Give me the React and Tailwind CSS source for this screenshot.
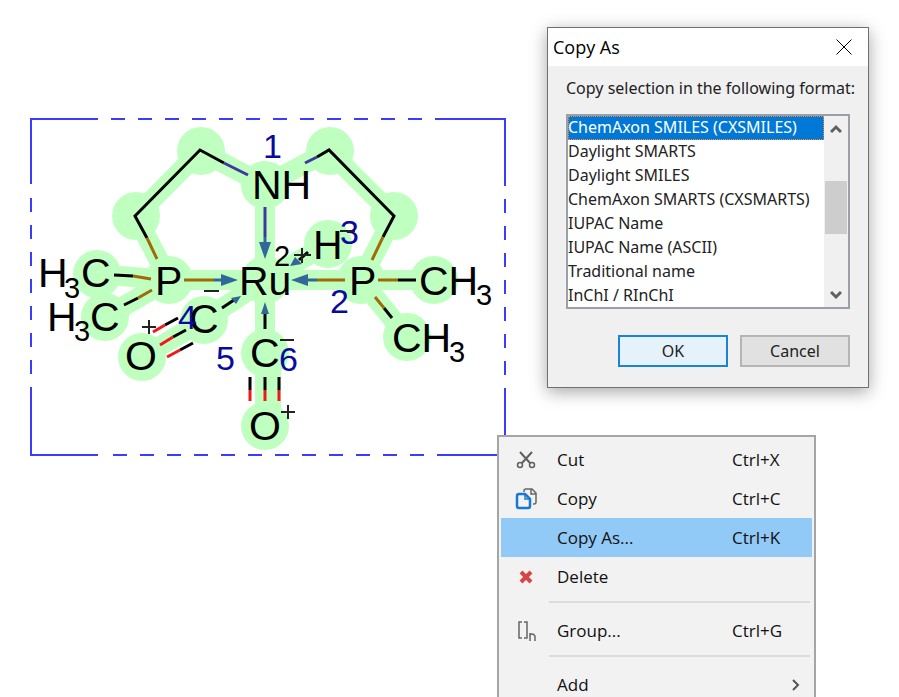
import React from 'react';

const formats = [
  'ChemAxon SMILES (CXSMILES)',
  'Daylight SMARTS',
  'Daylight SMILES',
  'ChemAxon SMARTS (CXSMARTS)',
  'IUPAC Name',
  'IUPAC Name (ASCII)',
  'Traditional name',
  'InChI / RInChI',
];

const atoms = [
  [201, 151], [136, 216], [265, 185], [330, 151], [394, 216], [169, 280], [265, 280], [361, 280],
  [434, 280], [407, 337], [97, 274], [105, 317], [204, 320], [142, 357], [265, 353], [265, 426], [328, 244],
];

const halos = [
  'M265 185L200 151L136 216L169 280H434', 'M265 185L329 151L394 216L361 280L407 337',
  'M97 274L169 280L105 317', 'M265 185V426', 'M271 353V426', 'M265 280L204 320L142 357', 'M328 244L265 280',
];

const bonds = [
  ['#000', 'M224 163L200 150L135 216L147 238M317 157L329 150L394 216L383 237M114 275L133 276M124 305L138 298M398 280H416M384 308L392 318M222 308L234 300M308 252L299 260M265 329V314M178 318L165 325M186 330L173 337M193 343L180 350M250 377V390M265 377V390M279 377V390'],
  ['#4038a0', 'M224 163L248 175M305 163L317 157M265 207V237'],
  ['#a06a08', 'M147 238L157 259M383 237L372 260M184 280H214M345 280H317M133 276L151 279M138 298L152 290M378 280H398M375 297L384 308'],
  ['#f01818', 'M165 325L153 332M173 337L160 345M180 350L167 357M250 390V401M265 390V401M279 390V401'],
  ['#336699', 'M265 237V244M214 280H222M317 280H306'],
];

const labels = [
  ['NH', 252, 199], ['H', 38, 287], ['C', 81, 287], ['H', 47, 331], ['C', 90, 331], ['P', 155, 295],
  ['Ru', 239, 295], ['H', 313, 259], ['P', 349, 295], ['CH', 419, 295], ['CH', 392, 352],
  ['C', 189, 333], ['O', 125, 370], ['C', 250, 367], ['O', 249, 440],
];
const subs = [['3', 64, 298], ['3', 74, 341], ['3', 476, 305], ['3', 449, 362], ['2', 274, 266]];
const marks = [['1', 263, 158], ['2', 330, 313], ['3', 340, 244], ['4', 178, 329], ['5', 216, 370], ['6', 279, 371]];

function Labels({ items, className }) {
  return (
    <g className={className}>
      {items.map(([t, x, y]) => <text key={`${x}-${y}`} x={x} y={y}>{t}</text>)}
    </g>
  );
}

function Molecule() {
  return (
    <svg width="520" height="470" viewBox="0 0 520 470" className="block font-['Liberation_Sans',Arial,sans-serif]" role="img" aria-label="Ruthenium complex">
      <g fill="#bfffbf">
        {atoms.map(([x, y]) => <circle key={`${x}-${y}`} cx={x} cy={y} r="24" />)}
      </g>
      <g fill="none" stroke="#bfffbf" strokeWidth="20">
        {halos.map((d) => <path key={d} d={d} />)}
      </g>
      <g fill="none" stroke="#3c3cff" strokeWidth="2">
        <path d="M98 119H31V184M31 387V455H98M437 119H505V186M505 389V455H437" />
        <path strokeDasharray="14 13" d="M111 119H437M113 455H437M31 198V387M505 199V389" />
      </g>
      <g fill="none" strokeWidth="3">
        {bonds.map(([c, d]) => <path key={c} stroke={c} d={d} />)}
      </g>
      <path fill="#336699" d="M259 242H271L265 259ZM221 274V286L238 280ZM308 274V286L291 280ZM261 314H269L265 302ZM290 266L295 257L302 264ZM241 296L231 298L236 304Z" />
      <Labels items={labels} className="text-[41px]" />
      <Labels items={subs} className="text-[29px]" />
      <Labels items={marks} className="fill-[#0a0a9c] text-[34px]" />
      <path fill="none" stroke="#222" strokeWidth="2" d="M294 255H311M302 248V263M340 231H355M204 291H219M280 340H294M142 327H156M149 320V334M281 412H295M288 405V419" />
    </svg>
  );
}

function CopyAsDialog() {
  return (
    <section role="dialog" aria-labelledby="dlg-title" className="absolute left-[547px] top-[27px] w-[322px] border border-[#707070] bg-[#f0f0f0] font-['Noto_Sans',sans-serif] shadow-[0_4px_16px_rgba(0,0,0,0.35)]">
      <header className="flex h-[38px] items-center justify-between bg-white pl-[5px] pr-4">
        <h1 id="dlg-title" className="font-['Open_Sans',sans-serif] text-[18px]">Copy As</h1>
        <button aria-label="Close">
          <svg width="16" height="16" viewBox="0 0 16 16" stroke="#000" strokeWidth="1"><path d="M.5.5L15.5 15.5M15.5.5L.5 15.5" /></svg>
        </button>
      </header>
      <div className="px-[18px] pb-5 pt-[10px]">
        <label htmlFor="format" className="block whitespace-nowrap text-[16px] leading-6 text-[#222]">Copy selection in the following format:</label>
        <div className="mt-[14px] flex h-[195px] border-2 border-[#9aa0a8] bg-white">
          <select id="format" size={8} defaultValue={formats[0]} className="min-w-0 flex-1 appearance-none overflow-hidden bg-white text-[16px] outline-none [scrollbar-width:none]">
            {formats.map((f) => (
              <option key={f} value={f} className="h-6 min-h-0 p-0 text-[16px] leading-6 text-[#222] checked:bg-[linear-gradient(#0078d7,#0078d7)] checked:outline-1 checked:-outline-offset-1 checked:outline-dotted checked:outline-[#ff8728] checked:[-webkit-text-fill-color:#fff]">{f}</option>
            ))}
          </select>
          <div className="flex w-6 flex-col items-center bg-[#f0f0f0] text-[#606060]">
            <svg width="12" height="24" viewBox="0 0 12 24" fill="none" stroke="currentColor" strokeWidth="3"><path d="M1 16L6 11L11 16" /></svg>
            <div className="mt-[41px] h-[53px] w-[22px] bg-[#cdcdcd]" />
            <svg className="mt-auto" width="12" height="24" viewBox="0 0 12 24" fill="none" stroke="currentColor" strokeWidth="3"><path d="M1 9L6 14L11 9" /></svg>
          </div>
        </div>
        <div className="mt-[26px] flex justify-end gap-3 text-[16px] leading-6 text-[#222]">
          <button className="h-8 w-[110px] border-2 border-[#1883d7] bg-[#e5f1fb]">OK</button>
          <button className="h-8 w-[110px] border-2 border-[#b5b5b5] bg-[#e1e1e1]">Cancel</button>
        </div>
      </div>
    </section>
  );
}

function CutIcon() {
  return (
    <svg width="20" height="18" viewBox="0 0 20 18" fill="none" stroke="#606060" strokeWidth="2">
      <path d="M4 1L14 12M16 1L6 12" /><circle cx="4" cy="14" r="2.5" strokeWidth="1.5" /><circle cx="16" cy="14" r="2.5" strokeWidth="1.5" />
    </svg>
  );
}

function CopyIcon() {
  return (
    <svg width="22" height="22" viewBox="0 0 22 22" fill="none">
      <path d="M9 4V3Q9 1 11 1H17L21 5V14Q21 16 19 16H18M16 1V6H21" stroke="#666" strokeWidth="1.5" />
      <path d="M4 6H10L15 11V18Q15 20 13 20H4Q2 20 2 18V8Q2 6 4 6Z" stroke="#1979d2" strokeWidth="2.5" strokeLinejoin="round" />
      <path d="M10 6V11H15" stroke="#1979d2" strokeWidth="1.5" />
    </svg>
  );
}

function DeleteIcon() {
  return <svg width="14" height="14" viewBox="0 0 14 14" stroke="#d64545" strokeWidth="4"><path d="M2 2L12 12M12 2L2 12" /></svg>;
}

function GroupIcon() {
  return (
    <svg width="20" height="22" viewBox="0 0 20 22" fill="none" stroke="#666" strokeWidth="1.5">
      <path d="M6 2H3V18H6M8 2H11V18H8M14 21V13M14 16Q14 14 16 14T19 16V21" />
    </svg>
  );
}

function MenuItem({ icon, label, keys, active, submenu }) {
  return (
    <button role="menuitem" className={`flex h-[39px] w-full items-center text-left ${active ? 'bg-[#91c9f7]' : ''}`}>
      <span className="flex w-[50px] justify-center">{icon}</span>
      <span className="flex-1 pl-[6px]">{label}</span>
      {keys && <span className="w-20">{keys}</span>}
      {submenu && <svg className="mr-3" width="8" height="12" viewBox="0 0 8 12" fill="none" stroke="#555" strokeWidth="2"><path d="M1 1L6 6L1 11" /></svg>}
    </button>
  );
}

function Separator() {
  return <div role="separator" className="ml-12 mr-[2px] h-[15px] pt-[5px]"><div className="h-[2px] bg-[#dcdcdc]" /></div>;
}

function ContextMenu() {
  return (
    <div role="menu" className="absolute left-[497px] top-[435px] w-[319px] border-2 border-[#a5a5a5] bg-[#f2f2f2] px-[2px] pb-1 pt-[3px] font-['Open_Sans',sans-serif] text-[17px] text-[#111]">
      <MenuItem icon={<CutIcon />} label="Cut" keys="Ctrl+X" />
      <MenuItem icon={<CopyIcon />} label="Copy" keys="Ctrl+C" />
      <MenuItem label="Copy As..." keys="Ctrl+K" active />
      <MenuItem icon={<DeleteIcon />} label="Delete" />
      <Separator />
      <MenuItem icon={<GroupIcon />} label="Group..." keys="Ctrl+G" />
      <Separator />
      <MenuItem label="Add" submenu />
    </div>
  );
}

export default function App() {
  return (
    <main className="relative h-screen overflow-hidden bg-white">
      <Molecule />
      <CopyAsDialog />
      <ContextMenu />
    </main>
  );
}
